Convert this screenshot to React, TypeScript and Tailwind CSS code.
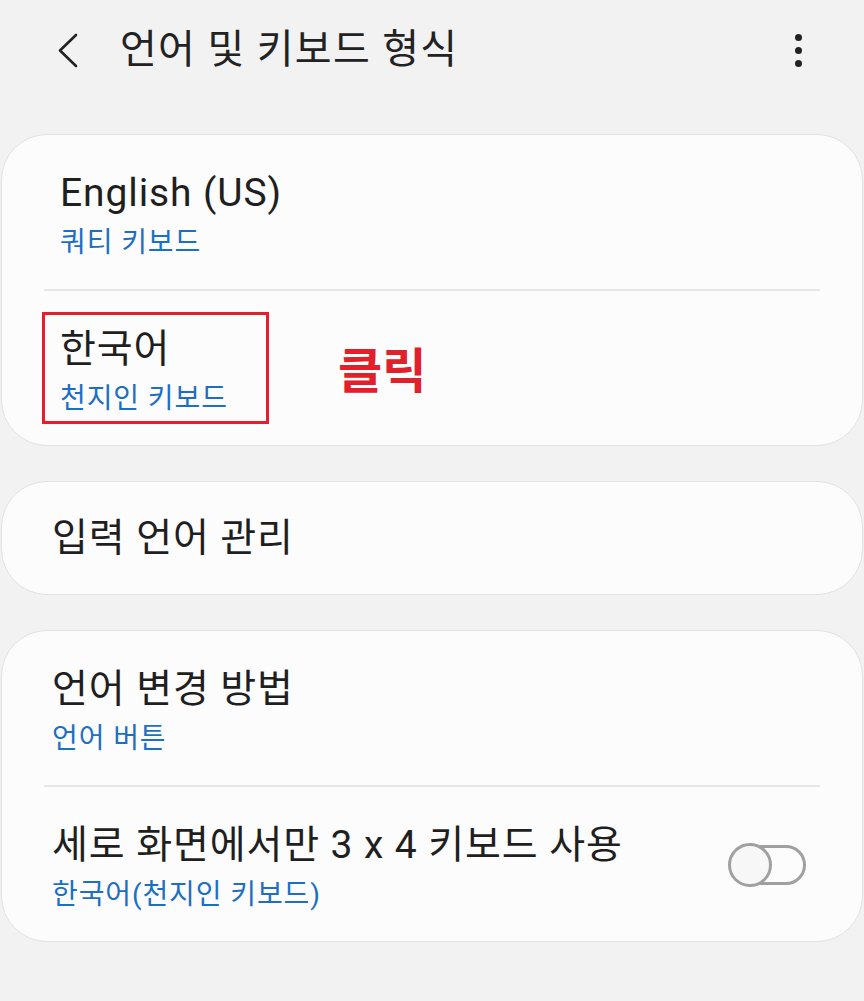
import React from 'react';

const FONT = { fontFamily: 'Roboto, "Noto Sans CJK KR", sans-serif' };

// 상단 바
function Header() {
  return (
    <div className="flex h-[134px] items-start justify-between pt-[26px] pl-[52px] pr-[62px]">
      <div className="flex items-center gap-[36px]">
        <svg width="32" height="48" viewBox="0 0 32 48" fill="none">
          <path d="M24 9 L8 24.5 L24 40" stroke="#222" strokeWidth="2.6" strokeLinecap="round" strokeLinejoin="round" />
        </svg>
        <div className="text-[40px] leading-[48px] text-[#222] tracking-[1.3px]">언어 및 키보드 형식</div>
      </div>
      <div className="flex h-[48px] flex-col items-center justify-center gap-[6px]">
        <div className="size-[7px] rounded-full bg-[#222]" />
        <div className="size-[7px] rounded-full bg-[#222]" />
        <div className="size-[7px] rounded-full bg-[#222]" />
      </div>
    </div>
  );
}

function Card({ children }: { children: React.ReactNode }) {
  return (
    <div className="mx-[1px] rounded-[46px] border border-[#e2e2e2] bg-[#fcfcfc]">{children}</div>
  );
}

function Divider() {
  return <div className="mx-[42px] h-[2px] bg-[#e6e6e6]" />;
}

interface RowProps {
  title: string;
  sub?: string;
  indent: string;
  children?: React.ReactNode;
}
function Row({ title, sub, indent, children }: RowProps) {
  return (
    <div className={`relative h-[154px] pt-[34px] ${indent}`}>
      <div className="text-[39px] leading-[48px] tracking-[0.9px] text-[#1f1f1f]">{title}</div>
      {sub && <div className="mt-[4px] text-[28px] leading-[44px] tracking-[0.9px] text-[#1c6fc2]">{sub}</div>}
      {children}
    </div>
  );
}

export default function App() {
  return (
    <div className="min-h-[1001px] w-[864px] bg-[#f2f2f2]" style={FONT}>
      <Header />

      <div className="flex flex-col gap-[35px]">
        {/* 키보드 목록 */}
        <Card>
          <Row title="English (US)" sub="쿼티 키보드" indent="pl-[58px]" />
          <Divider />
          <Row title="한국어" sub="천지인 키보드" indent="pl-[58px]">
            {/* 클릭 표시 */}
            <div className="absolute left-[40px] top-[21px] h-[112px] w-[227px] border-[3px] border-[#e2202b]" />
            <div className="absolute left-[336px] top-[52px] text-[48px] leading-[58px] font-bold text-[#e2202b]">
              클릭
            </div>
          </Row>
        </Card>

        <Card>
          <div className="flex h-[112px] items-center pl-[50px]">
            <div className="text-[39px] leading-[48px] tracking-[0.9px] text-[#1f1f1f]">입력 언어 관리</div>
          </div>
        </Card>

        <Card>
          <Row title="언어 변경 방법" sub="언어 버튼" indent="pl-[50px]" />
          <Divider />
          <div className="flex h-[154px] items-start justify-between pt-[34px] pl-[50px] pr-[56px]">
            <div>
              <div className="text-[39px] leading-[48px] tracking-[0.9px] text-[#1f1f1f]">세로 화면에서만 3 x 4 키보드 사용</div>
              <div className="mt-[4px] text-[28px] leading-[44px] tracking-[0.9px] text-[#1c6fc2]">한국어(천지인 키보드)</div>
            </div>
            {/* 스위치 */}
            <div className="relative mt-[22px] h-[44px] w-[78px]">
              <div className="absolute right-0 top-[2px] h-[40px] w-[66px] rounded-full border-[3px] border-[#a0a0a0]" />
              <div className="absolute left-0 top-0 size-[44px] rounded-full border-[3px] border-[#a0a0a0] bg-[#f7f7f7]" />
            </div>
          </div>
        </Card>
      </div>
    </div>
  );
}
